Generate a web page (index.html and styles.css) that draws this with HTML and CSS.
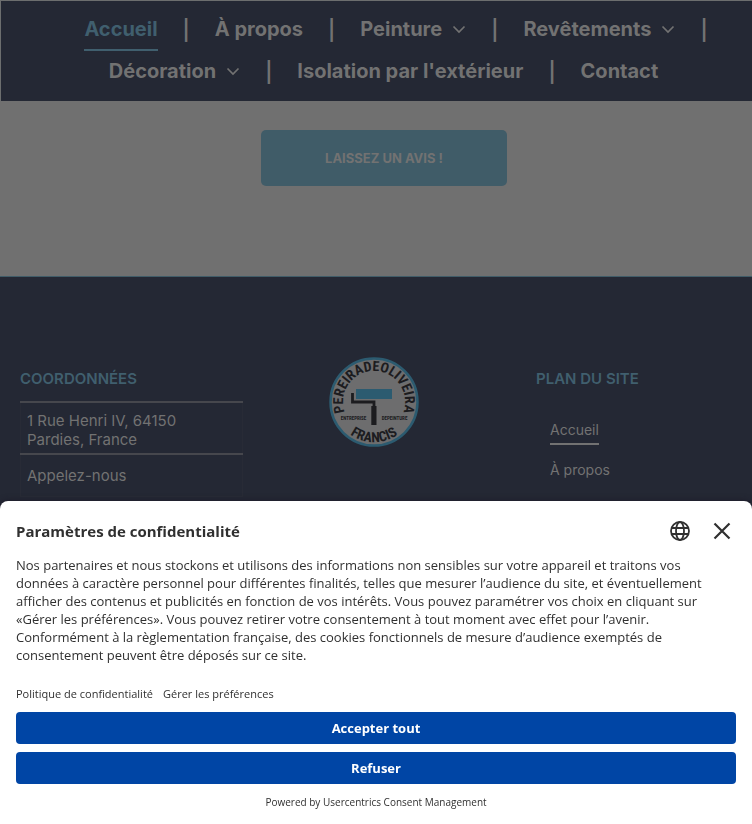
FILE: index.html
```html
<!DOCTYPE html>
<html lang="fr">
<head>
<meta charset="utf-8">
<meta name="viewport" content="width=device-width, initial-scale=1">
<title>Pereira de Oliveira Francis</title>
<link rel="stylesheet" href="styles.css">
</head>
<body>
<div class="page">
  <header class="site-header">
    <nav>
      <ul class="menu">
        <li><a class="active" href="#">Accueil</a><span class="sep">|</span></li>
        <li><a href="#">À propos</a><span class="sep">|</span></li>
        <li><a href="#">Peinture<svg class="chevron" viewBox="0 0 14 9"><path d="M1.500 1.500 7 7l5.500-5.500"/></svg></a><span class="sep">|</span></li>
        <li><a href="#">Revêtements<svg class="chevron" viewBox="0 0 14 9"><path d="M1.500 1.500 7 7l5.500-5.500"/></svg></a><span class="sep">|</span></li>
        <li><a href="#">Décoration<svg class="chevron" viewBox="0 0 14 9"><path d="M1.500 1.500 7 7l5.500-5.500"/></svg></a><span class="sep">|</span></li>
        <li><a href="#">Isolation par l'extérieur</a><span class="sep">|</span></li>
        <li><a href="#">Contact</a></li>
      </ul>
    </nav>
  </header>
  <main class="review">
    <a class="review-button" href="#">LAISSEZ UN AVIS !</a>
  </main>
  <footer class="site-footer">
    <section>
      <h2>COORDONNÉES</h2>
      <table class="contact">
        <tbody>
          <tr><td>1 Rue Henri IV, 64150<br>Pardies, France</td></tr>
          <tr><td>Appelez-nous</td></tr>
        </tbody>
      </table>
    </section>
    <div class="logo">
      <svg viewBox="0 0 90 90" role="img" aria-label="Pereira de Oliveira Francis">
        <defs>
          <path id="arc-top" d="M18.200 60.500A31 31 0 1 1 71.800 60.500"/>
          <path id="arc-bottom" d="M14 71A41 41 0 0 0 76 71"/>
        </defs>
        <circle cx="45" cy="45" r="43.500" fill="#6d6d6e" stroke="#2c5b70" stroke-width="2.500"/>
        <path d="M27 32h36v10H27z" fill="#2c5b70"/>
        <path d="M23.500 36v9H45V50" fill="none" stroke="#1c1c1f" stroke-width="2.800"/>
        <path d="M42.300 49h5.200v19h-5.200z" fill="#1c1c1f"/>
        <g class="logo-text">
          <text class="ring"><textPath href="#arc-top" startOffset="50%" text-anchor="middle">PEREIRADEOLIVEIRA</textPath></text>
          <text class="ring"><textPath href="#arc-bottom" startOffset="50%" text-anchor="middle">FRANCIS</textPath></text>
          <text class="small" x="24.500" y="62.500" text-anchor="middle">ENTREPRISE</text>
          <text class="small" x="65.500" y="62.500" text-anchor="middle">DEPEINTURE</text>
        </g>
      </svg>
    </div>
    <section class="sitemap">
      <h2>PLAN DU SITE</h2>
      <ul>
        <li><a class="active" href="#">Accueil</a></li>
        <li><a href="#">À propos</a></li>
      </ul>
    </section>
  </footer>
</div>

<div class="consent" role="dialog" aria-labelledby="consent-title">
  <div class="consent-head">
    <h1 id="consent-title">Paramètres de confidentialité</h1>
    <button class="icon-button" type="button" aria-label="Langue">
      <svg width="20" height="20" viewBox="0 0 20 20"><circle cx="10" cy="10" r="9"/><ellipse cx="10" cy="10" rx="4" ry="9"/><path d="M1.800 7h16.400M1.800 13h16.400"/></svg>
    </button>
    <button class="icon-button" type="button" aria-label="Fermer">
      <svg width="20" height="20" viewBox="0 0 20 20"><path class="cross" d="M2.500 2.500l15 15M17.500 2.500l-15 15"/></svg>
    </button>
  </div>
  <p class="consent-text">Nos partenaires et nous stockons et utilisons des informations non sensibles sur votre appareil et traitons vos données à caractère personnel pour différentes finalités, telles que mesurer l’audience du site, et éventuellement afficher des contenus et publicités en fonction de vos intérêts. Vous pouvez paramétrer vos choix en cliquant sur «Gérer les préférences». Vous pouvez retirer votre consentement à tout moment avec effet pour l’avenir. Conformément à la règlementation française, des cookies fonctionnels de mesure d’audience exemptés de consentement peuvent être déposés sur ce site.</p>
  <div class="consent-links"><a href="#">Politique de confidentialité</a><a href="#">Gérer les préférences</a></div>
  <div class="consent-actions">
    <button type="button">Accepter tout</button>
    <button type="button">Refuser</button>
  </div>
  <p class="powered">Powered by <a href="#">Usercentrics Consent Management</a></p>
</div>
</body>
</html>
```
FILE: styles.css
```css
* { box-sizing: border-box; }
body {
  margin: 0;
  background: #707070;
  color: #727272;
  font-family: Inter, Roboto, sans-serif;
}
a { color: inherit; text-decoration: none; }
ul { list-style: none; margin: 0; padding: 0; }
h1, h2, p { margin: 0; }

.page { height: 100vh; overflow: hidden; }

.site-header {
  background: #242834;
  border-top: 1px solid #6c6e6e;
  border-left: 1px solid #6c6e6e;
  padding: 8px 0 8px 14px;
}
.menu { display: flex; flex-wrap: wrap; justify-content: center; }
.menu li {
  display: flex;
  align-items: center;
  height: 42px;
  font-size: 20px;
  font-weight: 700;
}
.menu a {
  display: flex;
  align-items: center;
  gap: 10px;
  height: 42px;
  margin: 0 25px;
  border-bottom: 2px solid transparent;
}
.menu .active { color: #405f6e; border-color: #405f6e; }
.chevron { width: 14px; height: 9px; fill: none; stroke: #727272; stroke-width: 1.700; }
.sep { font-weight: 600; }

.review { display: flex; justify-content: center; padding: 29px 8px 90px 24px; }
.review-button {
  width: 246px;
  padding: 20px 8px;
  border-radius: 5px;
  background: #405c68;
  font-size: 13px;
  font-weight: 700;
  line-height: 16px;
  text-align: center;
}

.site-footer {
  display: grid;
  grid-template-columns: 223fr 262fr 227fr;
  min-height: 560px;
  padding: 80px 20px;
  border-top: 1px solid #405c68;
  background: #242834;
}
.site-footer h2 { color: #405f6e; font-size: 15px; font-weight: 600; line-height: 44px; }
.contact { width: 100%; border-collapse: collapse; font-size: 15px; line-height: 19px; }
.contact td {
  padding: 8px 6px 4px;
  border: 1px solid #282b36;
  border-top: 2px solid #46474d;
}
.contact tr + tr td { padding: 11px 6px; }
.logo { text-align: center; }
.logo svg { width: 90px; height: 90px; }
.logo-text { font-family: "Liberation Sans Narrow", "Roboto Condensed", Roboto, sans-serif; font-weight: 700; fill: #1c1c1f; }
.ring { font-size: 14px; }
.small { font-size: 5px; }
.sitemap { padding-left: 31px; }
.sitemap ul {
  display: flex;
  flex-direction: column;
  align-items: flex-start;
  gap: 12px;
  padding: 16px 14px;
  font-size: 14px;
  line-height: 26px;
}
.sitemap a { display: block; border-bottom: 2px solid transparent; }
.sitemap .active { border-color: #727272; }

.consent {
  position: fixed;
  right: 0;
  bottom: 0;
  left: 0;
  padding: 16px 16px 14px;
  border-radius: 8px 8px 0 0;
  background: #fff;
  box-shadow: 0 0 6px #1c1a28;
  color: #303030;
  font-family: "Open Sans", "Noto Sans", sans-serif;
}
.consent-head { display: flex; align-items: center; gap: 14px; height: 28px; }
.consent-head h1 { flex: 1; font-size: 15px; font-weight: 700; line-height: 28px; }
.icon-button { width: 28px; height: 28px; padding: 4px; border: 0; background: none; }
.icon-button svg { display: block; fill: none; stroke: #303030; stroke-width: 1.800; }
.icon-button .cross { stroke-width: 2.200; }
.consent-text { padding-top: 11px; font-size: 13px; line-height: 18px; }
.consent-links { display: flex; gap: 10px; padding: 22px 0 10px; font-size: 11px; line-height: 16px; }
.consent-actions { display: grid; gap: 8px; }
.consent-actions button {
  height: 32px;
  border: 0;
  border-radius: 4px;
  background: #0045a5;
  color: #fff;
  font: 700 13px/18px "Open Sans", "Noto Sans", sans-serif;
}
.powered { padding-top: 10px; font-size: 10px; line-height: 16px; text-align: center; }
```
